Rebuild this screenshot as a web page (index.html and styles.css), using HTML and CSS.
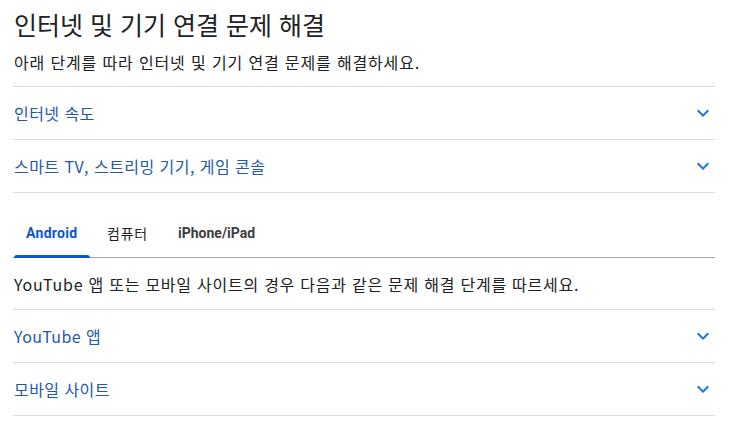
FILE: index.html
```html
<!DOCTYPE html>
<html lang="ko">
<head>
<meta charset="utf-8">
<title>인터넷 및 기기 연결 문제 해결</title>
<link rel="stylesheet" href="styles.css">
</head>
<body>
<main class="page">
  <h1 class="title">인터넷 및 기기 연결 문제 해결</h1>
  <p class="subtitle">아래 단계를 따라 인터넷 및 기기 연결 문제를 해결하세요.</p>
  <div class="accordion">
    <div class="row"><span class="row-label">인터넷 속도</span><svg class="chev" viewBox="0 0 24 24"><path d="M16.59 8.59L12 13.17 7.41 8.59 6 10l6 6 6-6z"/></svg></div>
    <div class="row"><span class="row-label">스마트 TV, 스트리밍 기기, 게임 콘솔</span><svg class="chev" viewBox="0 0 24 24"><path d="M16.59 8.59L12 13.17 7.41 8.59 6 10l6 6 6-6z"/></svg></div>
  </div>
  <nav class="tabs">
    <span class="tab active">Android</span>
    <span class="tab tab-ko">컴퓨터</span>
    <span class="tab">iPhone/iPad</span>
  </nav>
  <p class="desc">YouTube 앱 또는 모바일 사이트의 경우 다음과 같은 문제 해결 단계를 따르세요.</p>
  <div class="accordion">
    <div class="row"><span class="row-label">YouTube 앱</span><svg class="chev" viewBox="0 0 24 24"><path d="M16.59 8.59L12 13.17 7.41 8.59 6 10l6 6 6-6z"/></svg></div>
    <div class="row"><span class="row-label">모바일 사이트</span><svg class="chev" viewBox="0 0 24 24"><path d="M16.59 8.59L12 13.17 7.41 8.59 6 10l6 6 6-6z"/></svg></div>
  </div>
</main>
</body>
</html>
```
FILE: styles.css
```css
html, body {
  margin: 0;
  padding: 0;
  background: #ffffff;
}
body {
  font-family: "Noto Sans CJK KR", "Roboto", "Liberation Sans", sans-serif;
  color: #202124;
}
.page {
  width: 702px;
  margin-left: 13px;
  padding-top: 8px;
}
.title {
  margin: 0 0 0 1px;
  font-size: 25px;
  font-weight: 400;
  line-height: 32px;
}
.subtitle {
  margin: 10px 0 12px 1px;
  font-size: 16px;
  line-height: 24px;
  letter-spacing: 0.85px;
}
.accordion {
  border-bottom: 1px solid #dadce0;
}
.row {
  display: flex;
  align-items: center;
  justify-content: space-between;
  height: 52px;
  border-top: 1px solid #dadce0;
}
.row-label {
  font-size: 16px;
  color: #2458ad;
  padding-left: 1px;
  letter-spacing: 0.45px;
}
.chev {
  width: 24px;
  height: 24px;
  fill: #1a73e8;
}
.tabs {
  display: flex;
  margin-top: 16px;
  height: 48px;
  border-bottom: 1px solid #a8a8a8;
}
.tab {
  display: flex;
  align-items: center;
  padding: 0 13px;
  font-family: "Roboto", "Noto Sans CJK KR", sans-serif;
  font-size: 14px;
  font-weight: 700;
  color: #3c4043;
  margin-right: 4px;
}
.tab-ko {
  font-weight: 400;
  color: #202124;
  font-family: "Noto Sans CJK KR", sans-serif;
  letter-spacing: 0.8px;
}
.tab.active {
  color: #0b57d0;
  position: relative;
  width: 51px;
  letter-spacing: 0.3px;
}
.tab.active::after {
  content: "";
  position: absolute;
  left: 1px;
  right: 0;
  bottom: -1px;
  height: 3px;
  background: #0b57d0;
  border-radius: 3px 3px 0 0;
}
.desc {
  margin: 0;
  padding: 14px 0 13px 1px;
  font-size: 16px;
  line-height: 24px;
  letter-spacing: 0.75px;
}
```
